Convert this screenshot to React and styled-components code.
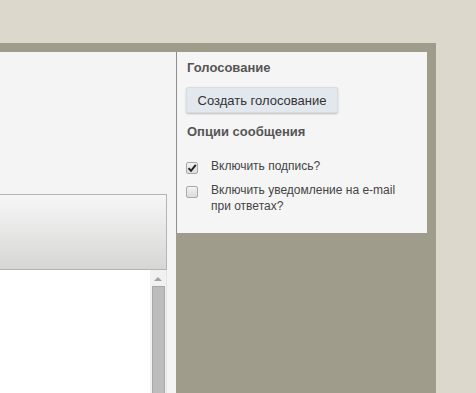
import React from "react";
import styled, { createGlobalStyle } from "styled-components";

const GlobalStyle = createGlobalStyle`
  html, body {
    margin: 0;
    padding: 0;
    background: #dcd9cc;
    font-family: "Liberation Sans", Arial, sans-serif;
    overflow: hidden;
  }
`;

const Check = ({ checked }) => (
  <Box>
    {checked && (
      <svg width="10" height="10" viewBox="0 0 10 10">
        <path d="M1.5 5.2 L4 7.8 L8.8 1.8" fill="none" stroke="#222" strokeWidth="1.9" />
      </svg>
    )}
  </Box>
);

const App = () => {
  return (
    <>
      <GlobalStyle />
      <Page>
        <Frame>
          <LeftPanel>
            <Editor>
              <Toolbar />
              <TextArea>
                <Scrollbar>
                  <Arrow />
                  <Thumb />
                </Scrollbar>
              </TextArea>
            </Editor>
          </LeftPanel>
          <Sidebar>
            <Heading>Голосование</Heading>
            <Button>Создать голосование</Button>
            <Heading $top={11}>Опции сообщения</Heading>
            <Option $top={18}>
              <Check checked />
              <Label>Включить подпись?</Label>
            </Option>
            <Option $top={8}>
              <Check />
              <Label>
                Включить уведомление на e-mail
                <br />
                при ответах?
              </Label>
            </Option>
          </Sidebar>
        </Frame>
      </Page>
    </>
  );
};

const Page = styled.div`
  padding-top: 43px;
  height: 100vh;
  box-sizing: border-box;
`;

const Frame = styled.div`
  width: 436px;
  height: 100%;
  box-sizing: border-box;
  background: #9f9c8b;
  padding: 9px 9px 0 0;
  display: flex;
  align-items: flex-start;
`;

const LeftPanel = styled.div`
  width: 176px;
  flex: none;
  height: 100%;
  background: #f4f4f4;
  padding-top: 142px;
  box-sizing: border-box;
`;

const Editor = styled.div`
  width: 167px;
  height: 100%;
  display: flex;
  flex-direction: column;
`;

const Toolbar = styled.div`
  height: 74px;
  border: 1px solid #b4b4b4;
  border-left: none;
  background: linear-gradient(#f6f6f6, #d6d7d5);
`;

const TextArea = styled.div`
  flex: 1;
  background: #ffffff;
  display: flex;
  justify-content: flex-end;
  border-right: 1px solid #e4e4e4;
`;

const Scrollbar = styled.div`
  width: 16px;
  background: #f1f1f1;
  display: flex;
  flex-direction: column;
  align-items: center;
`;

const Arrow = styled.div`
  margin-top: 7px;
  width: 0;
  height: 0;
  border-left: 4px solid transparent;
  border-right: 4px solid transparent;
  border-bottom: 4px solid #a3a3a3;
`;

const Thumb = styled.div`
  margin-top: 5px;
  width: 11px;
  flex: 1;
  background: #bcbcbc;
  border: 1px solid #a8a8a8;
  border-bottom: none;
`;

const Sidebar = styled.div`
  width: 251px;
  flex: none;
  height: 181px;
  box-sizing: border-box;
  background: #f5f5f5;
  border-left: 1px solid #8e8e8e;
  padding: 8px 0 0 10px;
`;

const Heading = styled.div`
  margin-top: ${(p) => p.$top || 0}px;
  font-size: 13px;
  line-height: 16px;
  font-weight: bold;
  color: #555555;
`;

const Button = styled.button`
  display: block;
  margin: 11px 0 0 -1px;
  width: 152px;
  height: 26px;
  padding: 0;
  font-family: "Liberation Sans", Arial, sans-serif;
  font-size: 13px;
  color: #333333;
  background: #e3e8ee;
  border: 1px solid #d8dde3;
  border-radius: 2px;
  box-shadow: 0 1px 2px rgba(0, 0, 0, 0.22);
`;

const Option = styled.div`
  margin-top: ${(p) => p.$top}px;
  display: flex;
  align-items: flex-start;
`;

const Box = styled.span`
  margin: 4px 13px 0 -1px;
  width: 12px;
  height: 12px;
  flex: none;
  box-sizing: border-box;
  border: 1px solid #a9a9a9;
  border-radius: 2px;
  background: linear-gradient(#f2f2f2, #dcdcdc);
  display: flex;
  align-items: center;
  justify-content: center;
`;

const Label = styled.span`
  font-size: 12px;
  line-height: 16px;
  color: #444444;
`;

export default App;
